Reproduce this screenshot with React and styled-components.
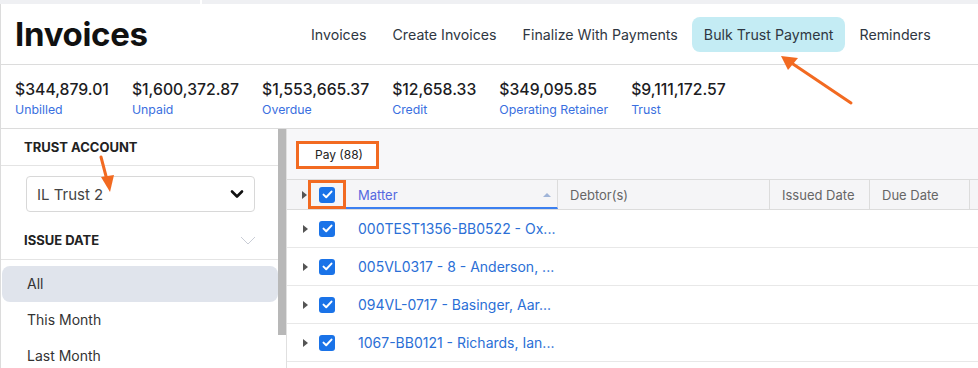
import React from 'react';
import styled, {createGlobalStyle} from "styled-components";

const Global = createGlobalStyle`
  body {
    margin: 0;
    background: #fff;
    font-family: Inter, "Noto Sans", sans-serif;
    overflow: hidden;
  }
`

const Shell = styled.div`
  position: relative;
  width: 978px;
  height: 368px;
  overflow: hidden;
`
const TopStrip = styled.div`
  display: flex;
  gap: 2px;
  height: 4px;
`
const StripBlock = styled.div`
  background: #eff0f3;
  width: ${p => p.w ? p.w + 'px' : 'auto'};
  flex: ${p => p.w ? 'none' : 1};
`
const Page = styled.div`
  border-left: 1px solid #dcdcdc;
`
const Header = styled.div`
  display: flex;
  align-items: center;
  height: 60px;
  border-bottom: 1px solid #dcdcdc;
`
const Title = styled.h1`
  margin: 0;
  width: 297px;
  padding-left: 14px;
  box-sizing: border-box;
  font-size: 33px;
  font-weight: 700;
  color: #111;
  letter-spacing: -0.3px;
`
const Nav = styled.nav`
  display: flex;
  align-items: center;
`
const NavItem = styled.div`
  padding: 0 ${p => p.active ? 12 : 13}px;
  margin: 0 ${p => p.active ? 1 : 0}px;
  height: 35px;
  line-height: 35px;
  border-radius: 8px;
  font-size: 14.2px;
  color: #2f3742;
  background: ${p => p.active ? '#c4ecf4' : 'transparent'};
`
const Summary = styled.div`
  display: flex;
  gap: 23px;
  height: 64px;
  padding: 15px 0 0 14px;
  box-sizing: border-box;
  border-bottom: 1px solid #dcdcdc;
`
const Stat = styled.div`
  display: flex;
  flex-direction: column;
  gap: 3px;
`
const Amount = styled.div`
  font-size: 15.75px;
  font-weight: 500;
  color: #1d1d1f;
`
const StatLabel = styled.div`
  font-size: 12.3px;
  color: #3a6fe0;
`
const Body = styled.div`
  display: flex;
  height: 240px;
`
const Sidebar = styled.div`
  width: 277px;
  flex: none;
`
const SectionHead = styled.div`
  display: flex;
  align-items: center;
  justify-content: space-between;
  height: ${p => p.h}px;
  box-sizing: border-box;
  padding: ${p => p.top || 0}px 22px 0 23px;
  border-bottom: 1px solid #e4e4e4;
  font-size: 13px;
  font-weight: 700;
  color: #222;
`
const SelectWrap = styled.div`
  padding: 10px 23px 0 25px;
`
const Select = styled.div`
  display: flex;
  align-items: center;
  justify-content: space-between;
  height: 34px;
  padding: 0 10px;
  border: 1px solid #d8d8d8;
  border-radius: 4px;
  font-size: 15px;
  color: #444;
`
const List = styled.div`
  padding: 6px 0 0 1px;
`
const ListItem = styled.div`
  height: 36px;
  line-height: 36px;
  padding-left: 25px;
  border-radius: 8px;
  font-size: 14px;
  color: #333;
  background: ${p => p.active ? '#e0e4ec' : 'transparent'};
`
const Scrollbar = styled.div`
  width: 8px;
  flex: none;
  border-right: 1px solid #e0e0e0;
  background: #fff;
`
const Thumb = styled.div`
  height: 206px;
  background: #b8b8b8;
`
const Main = styled.div`
  flex: 1;
  min-width: 0;
`
const Toolbar = styled.div`
  height: 51px;
  padding: 12px 0 0 9px;
  box-sizing: border-box;
  background: #f7f7f9;
  border-bottom: 1px solid #dcdcdc;
`
const PayButton = styled.div`
  display: inline-block;
  width: 83px;
  height: 28px;
  box-sizing: border-box;
  line-height: 22px;
  padding-left: 16px;
  background: #fff;
  border: 3px solid #f26a21;
  font-size: 12px;
  color: #222;
`
const Row = styled.div`
  display: flex;
  align-items: center;
  height: ${p => p.head ? 29 : 37}px;
  background: ${p => p.head ? '#f5f5f7' : '#fff'};
  border-bottom: 1px solid ${p => p.head ? '#dcdcdc' : '#e8e8e8'};
`
const Expander = styled.div`
  width: 6px;
  padding-left: ${p => p.head ? 15 : 16}px;
  margin-right: ${p => p.head ? 0 : -1}px;
  flex: none;
  display: flex;
`
const Caret = styled.div`
  width: 0;
  height: 0;
  border-top: 4px solid transparent;
  border-bottom: 4px solid transparent;
  border-left: 5px solid #555;
`
const CheckCell = styled.div`
  width: 38px;
  height: 100%;
  flex: none;
  display: flex;
  align-items: center;
  justify-content: center;
  box-sizing: border-box;
  border: ${p => p.marked ? '3px solid #f26a21' : 'none'};
`
const Box = styled.div`
  width: 16px;
  height: 16px;
  border-radius: 3px;
  background: #1a73e8;
  display: flex;
  align-items: center;
  justify-content: center;
`
const HeadCell = styled.div`
  position: relative;
  width: ${p => p.w}px;
  flex: none;
  height: 100%;
  display: flex;
  align-items: center;
  padding-left: 12px;
  box-sizing: border-box;
  border-right: 1px solid #dcdcdc;
  font-size: 13px;
  color: ${p => p.sorted ? '#5468e0' : '#666'};
  border-bottom: ${p => p.sorted ? '2px solid #3b7ff0' : 'none'};
  padding-top: ${p => p.sorted ? 2 : 0}px;
`
const SortArrow = styled.div`
  position: absolute;
  right: 6px;
  top: 13px;
  width: 0;
  height: 0;
  border-left: 4px solid transparent;
  border-right: 4px solid transparent;
  border-bottom: 4px solid #9fb4d8;
`
const MatterLink = styled.div`
  padding-left: 12px;
  font-size: 14px;
  color: #2b6fd6;
  white-space: nowrap;
`
const Arrow = styled.svg`
  position: absolute;
  left: 0;
  top: 0;
  pointer-events: none;
`

const Check = () => (
  <Box>
    <svg width="11" height="9" viewBox="0 0 11 9">
      <path d="M1.5 4.6 L4.2 7.2 L9.5 1.6" fill="none" stroke="#fff" strokeWidth="2" strokeLinecap="round" strokeLinejoin="round"/>
    </svg>
  </Box>
)

const stats = [
  ["$344,879.01", "Unbilled"],
  ["$1,600,372.87", "Unpaid"],
  ["$1,553,665.37", "Overdue"],
  ["$12,658.33", "Credit"],
  ["$349,095.85", "Operating Retainer"],
  ["$9,111,172.57", "Trust"],
]

const rows = [
  "000TEST1356-BB0522 - Ox...",
  "005VL0317 - 8 - Anderson, ...",
  "094VL-0717 - Basinger, Aar...",
  "1067-BB0121 - Richards, Ian...",
]

function App() {
  return (
    <Shell>
      <Global />
      <TopStrip><StripBlock w={200} /><StripBlock /></TopStrip>
      <Page>
        <Header>
          <Title>Invoices</Title>
          <Nav>
            <NavItem>Invoices</NavItem>
            <NavItem>Create Invoices</NavItem>
            <NavItem>Finalize With Payments</NavItem>
            <NavItem active>Bulk Trust Payment</NavItem>
            <NavItem>Reminders</NavItem>
          </Nav>
        </Header>
        <Summary>
          {stats.map(([a, l]) => (
            <Stat key={l}><Amount>{a}</Amount><StatLabel>{l}</StatLabel></Stat>
          ))}
        </Summary>
        <Body>
          <Sidebar>
            <SectionHead h={37}>TRUST ACCOUNT</SectionHead>
            <SelectWrap>
              <Select>
                IL Trust 2
                <svg width="14" height="10" viewBox="0 0 14 10">
                  <path d="M2 2.5 L7 7.5 L12 2.5" fill="none" stroke="#111" strokeWidth="2.6" strokeLinecap="round" strokeLinejoin="round"/>
                </svg>
              </Select>
            </SelectWrap>
            <SectionHead h={48} top={9}>
              ISSUE DATE
              <svg width="16" height="9" viewBox="0 0 16 9">
                <path d="M1 1 L8 8 L15 1" fill="none" stroke="#c9cdd6" strokeWidth="1"/>
              </svg>
            </SectionHead>
            <List>
              <ListItem active>All</ListItem>
              <ListItem>This Month</ListItem>
              <ListItem>Last Month</ListItem>
            </List>
          </Sidebar>
          <Scrollbar><Thumb /></Scrollbar>
          <Main>
            <Toolbar><PayButton>Pay (88)</PayButton></Toolbar>
            <Row head>
              <Expander head><Caret /></Expander>
              <CheckCell marked><Check /></CheckCell>
              <HeadCell w={212} sorted>Matter<SortArrow /></HeadCell>
              <HeadCell w={212}>Debtor(s)</HeadCell>
              <HeadCell w={100}>Issued Date</HeadCell>
              <HeadCell w={100}>Due Date</HeadCell>
            </Row>
            {rows.map(r => (
              <Row key={r}>
                <Expander><Caret /></Expander>
                <CheckCell><Check /></CheckCell>
                <MatterLink>{r}</MatterLink>
              </Row>
            ))}
          </Main>
        </Body>
      </Page>
      <Arrow width="978" height="368">
        <line x1="851" y1="103" x2="790" y2="62" stroke="#f26a21" strokeWidth="3" strokeLinecap="round"/>
        <polygon points="781,56 798,58 788,70" fill="#f26a21"/>
        <line x1="101" y1="157" x2="107" y2="180" stroke="#f26a21" strokeWidth="3" strokeLinecap="round"/>
        <polygon points="110,192 101,177 114,175" fill="#f26a21"/>
      </Arrow>
    </Shell>
  );
}

export default App;
